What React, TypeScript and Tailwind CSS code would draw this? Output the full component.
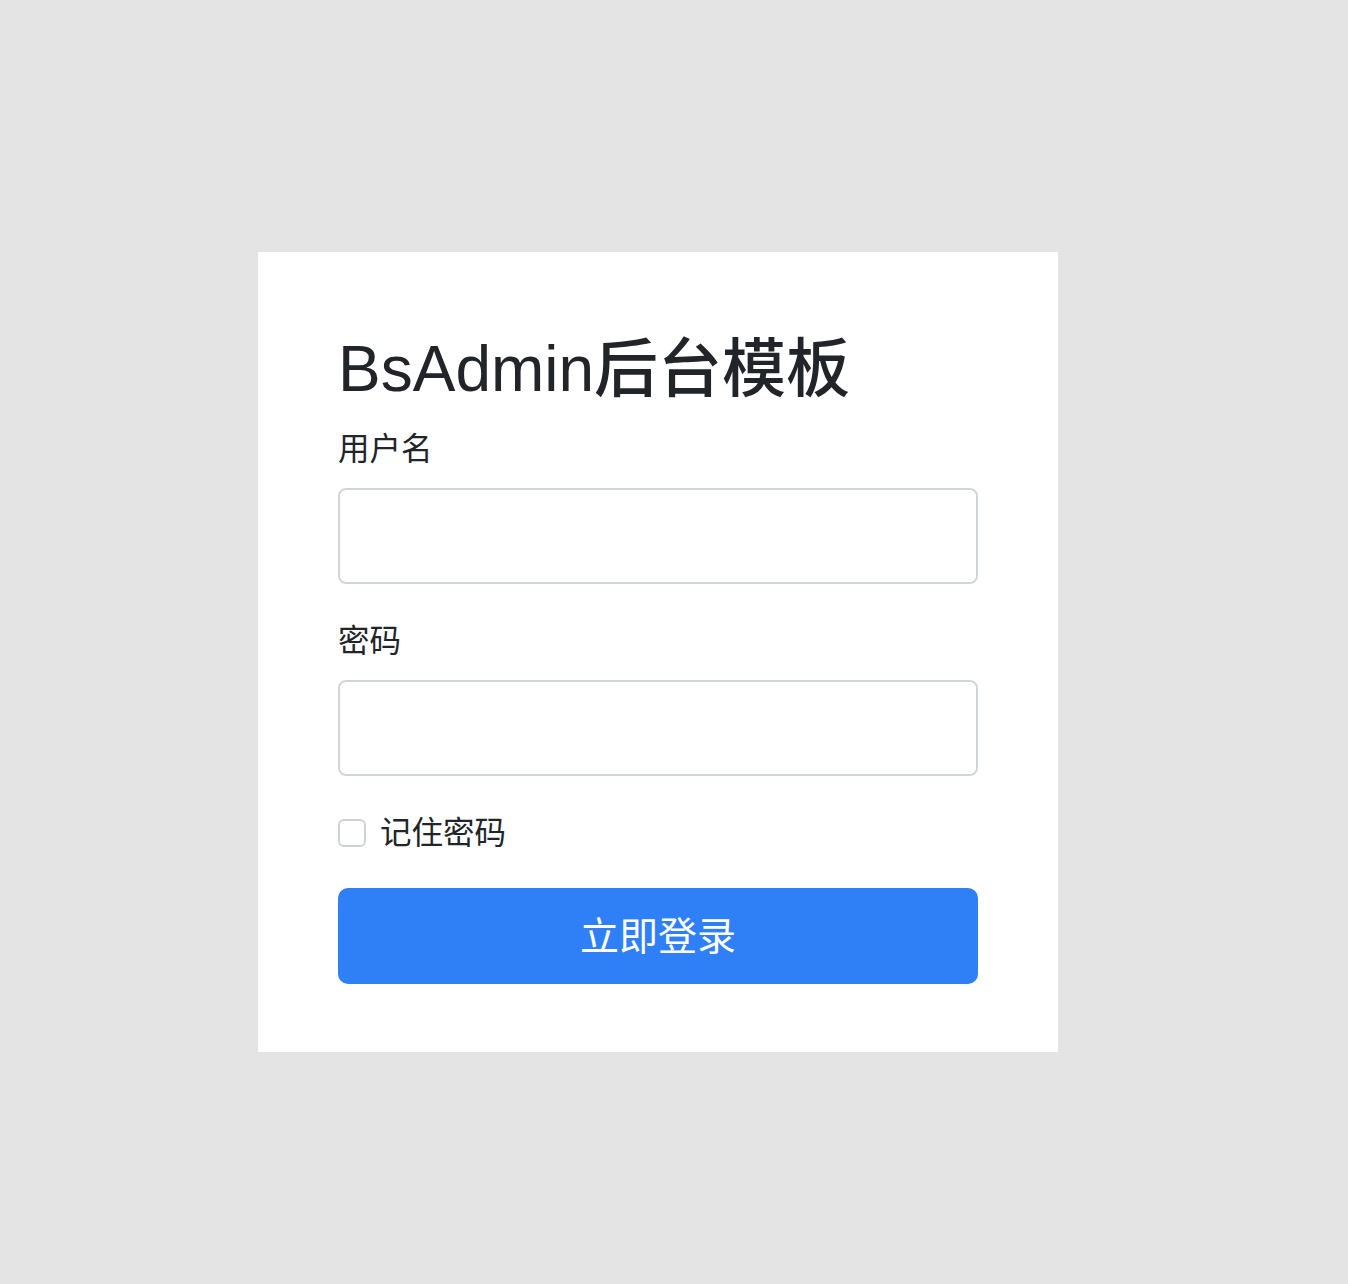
import React, { useState } from 'react';

export default function App() {
  const [remember, setRemember] = useState(false);

  return (
    <div
      className="min-h-[1284px] w-full bg-[#e4e4e4] pt-[252px] pl-[258px]"
      style={{ fontFamily: '"Liberation Sans", "Noto Sans CJK SC", sans-serif' }}
    >
      {/* Login card */}
      <div className="w-[800px] h-[800px] bg-white px-[80px] pt-[80px] text-[#212529]">
        <h2 className="text-[64px] leading-[74px] font-medium mb-[20px]">BsAdmin后台模板</h2>

        <div className="mb-[34px]">
          <label className="block text-[31.5px] leading-[46px] mb-[16px]">用户名</label>
          <input
            type="text"
            className="block w-full h-[96px] border-2 border-[#d3d6d9] rounded-[8px] px-[24px] text-[31px] outline-none"
          />
        </div>

        <div className="mb-[34px]">
          <label className="block text-[31.5px] leading-[46px] mb-[16px]">密码</label>
          <input
            type="password"
            className="block w-full h-[96px] border-2 border-[#d3d6d9] rounded-[8px] px-[24px] text-[31px] outline-none"
          />
        </div>

        <label className="flex items-center gap-[14px] h-[46px] mt-[3px] mb-[32px] cursor-pointer">
          <span
            onClick={() => setRemember(!remember)}
            className="w-[28px] h-[28px] rounded-[6px] border-2 border-[#cfd2d5] bg-white"
          />
          <span className="text-[31.5px] leading-[46px]">记住密码</span>
        </label>

        <button className="w-full h-[96px] rounded-[10px] bg-[#2f7ff6] text-white text-[39px] leading-none">
          立即登录
        </button>
      </div>
    </div>
  );
}
